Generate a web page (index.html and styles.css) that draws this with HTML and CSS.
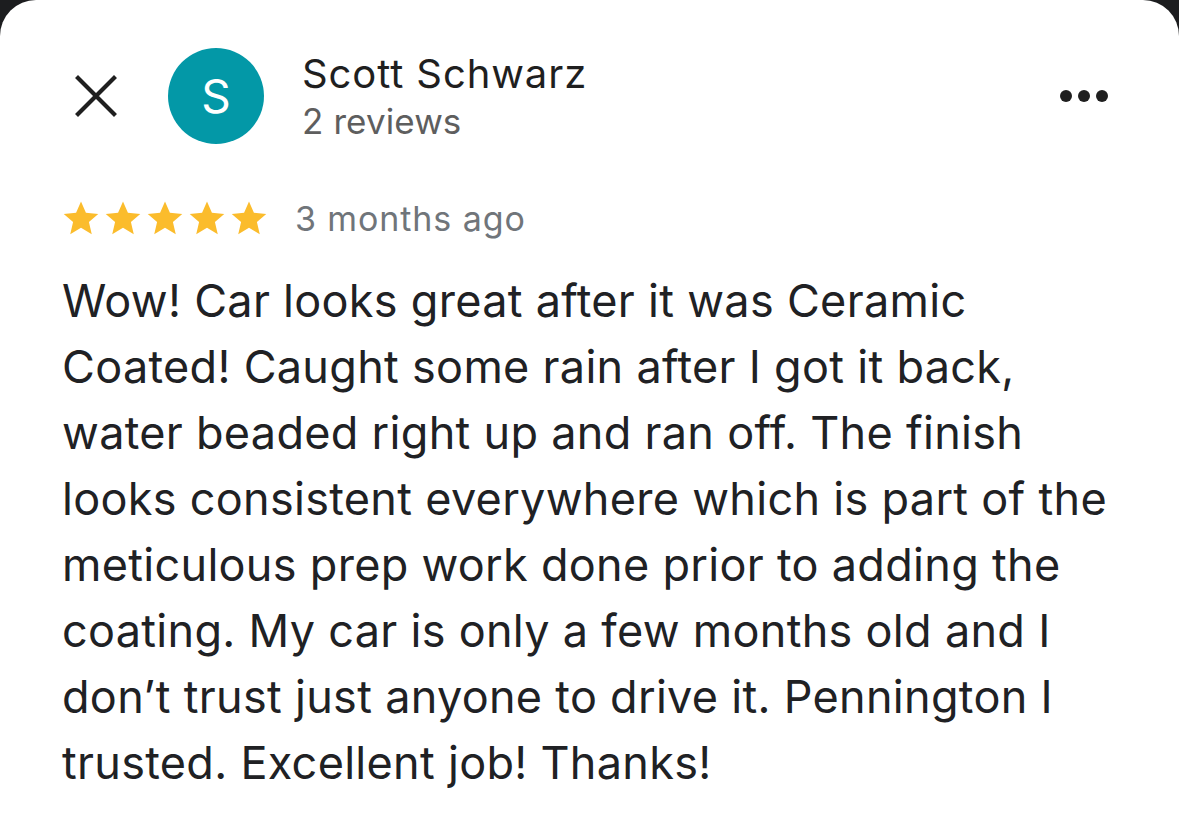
FILE: index.html
```html
<!DOCTYPE html>
<html lang="en">
<head>
<meta charset="utf-8">
<title>Review</title>
<link rel="stylesheet" href="styles.css">
</head>
<body>
<div class="sheet">
  <header class="head">
    <button class="close" aria-label="Close">
      <svg width="42" height="42" viewBox="0 0 42 42"><path d="M3 3 L39 39 M39 3 L3 39" stroke="#1f1f1f" stroke-width="4.2" stroke-linecap="square" fill="none"/></svg>
    </button>
    <div class="avatar">S</div>
    <div class="who">
      <div class="name">Scott Schwarz</div>
      <div class="count">2 reviews</div>
    </div>
    <button class="more" aria-label="More">
      <svg width="50" height="14" viewBox="0 0 50 14"><circle cx="7" cy="7" r="6" fill="#1f1f1f"/><circle cx="25" cy="7" r="6" fill="#1f1f1f"/><circle cx="43" cy="7" r="6" fill="#1f1f1f"/></svg>
    </button>
  </header>
  <div class="meta">
    <div class="stars">
      <svg class="star" viewBox="0 0 24 24"><path d="M12 1.5l3.1 7.2 7.8.7-5.9 5.2 1.8 7.7L12 18.2l-6.8 4.1 1.8-7.7-5.9-5.2 7.8-.7z"/></svg>
      <svg class="star" viewBox="0 0 24 24"><path d="M12 1.5l3.1 7.2 7.8.7-5.9 5.2 1.8 7.7L12 18.2l-6.8 4.1 1.8-7.7-5.9-5.2 7.8-.7z"/></svg>
      <svg class="star" viewBox="0 0 24 24"><path d="M12 1.5l3.1 7.2 7.8.7-5.9 5.2 1.8 7.7L12 18.2l-6.8 4.1 1.8-7.7-5.9-5.2 7.8-.7z"/></svg>
      <svg class="star" viewBox="0 0 24 24"><path d="M12 1.5l3.1 7.2 7.8.7-5.9 5.2 1.8 7.7L12 18.2l-6.8 4.1 1.8-7.7-5.9-5.2 7.8-.7z"/></svg>
      <svg class="star" viewBox="0 0 24 24"><path d="M12 1.5l3.1 7.2 7.8.7-5.9 5.2 1.8 7.7L12 18.2l-6.8 4.1 1.8-7.7-5.9-5.2 7.8-.7z"/></svg>
    </div>
    <span class="ago">3 months ago</span>
  </div>
  <p class="text">Wow! Car looks great after it was Ceramic Coated! Caught some rain after I got it back, water beaded right up and ran off. The finish looks consistent everywhere which is part of the meticulous prep work done prior to adding the coating. My car is only a few months old and I don’t trust just anyone to drive it. Pennington I trusted. Excellent job! Thanks!</p>
</div>
</body>
</html>
```

FILE: styles.css
```css
* { box-sizing: border-box; }
html, body { margin: 0; height: 100%; }
body {
  background: #1c1d1f;
  font-family: Inter, "Noto Sans", sans-serif;
  overflow: hidden;
}
.sheet {
  background: #fff;
  border-radius: 36px 36px 0 0;
  min-height: 833px;
  padding: 48px 62px 0 62px;
}
.head {
  display: flex;
  align-items: center;
  height: 96px;
}
.close {
  border: 0;
  background: none;
  padding: 0;
  margin-left: 13px;
  width: 42px;
  height: 42px;
  display: flex;
}
.avatar {
  width: 96px;
  height: 96px;
  border-radius: 50%;
  background: #0398a7;
  color: #fff;
  font-size: 46px;
  display: flex;
  align-items: center;
  justify-content: center;
  margin-left: 51px;
}
.who {
  margin-left: 38px;
  flex: 1;
  align-self: flex-start;
  margin-top: 2px;
}
.name {
  font-size: 40px;
  color: #1f1f1f;
  line-height: 48px;
  letter-spacing: 0.9px;
}
.count {
  font-size: 35px;
  color: #5e5e5e;
  line-height: 46px;
  letter-spacing: 0.1px;
}
.more {
  border: 0;
  background: none;
  padding: 0;
  margin-right: 8px;
  display: flex;
}
.meta {
  display: flex;
  align-items: center;
  margin-top: 52px;
  height: 44px;
}
.stars { display: flex; gap: 4px; }
.star { width: 38px; height: 38px; fill: #fbbc2c; }
.ago {
  margin-left: 27px;
  font-size: 34px;
  color: #70757a;
  letter-spacing: 0.9px;
}
.text {
  margin: 28px 0 0 0;
  font-size: 45px;
  line-height: 66px;
  color: #202124;
  letter-spacing: 0.3px;
}
```
